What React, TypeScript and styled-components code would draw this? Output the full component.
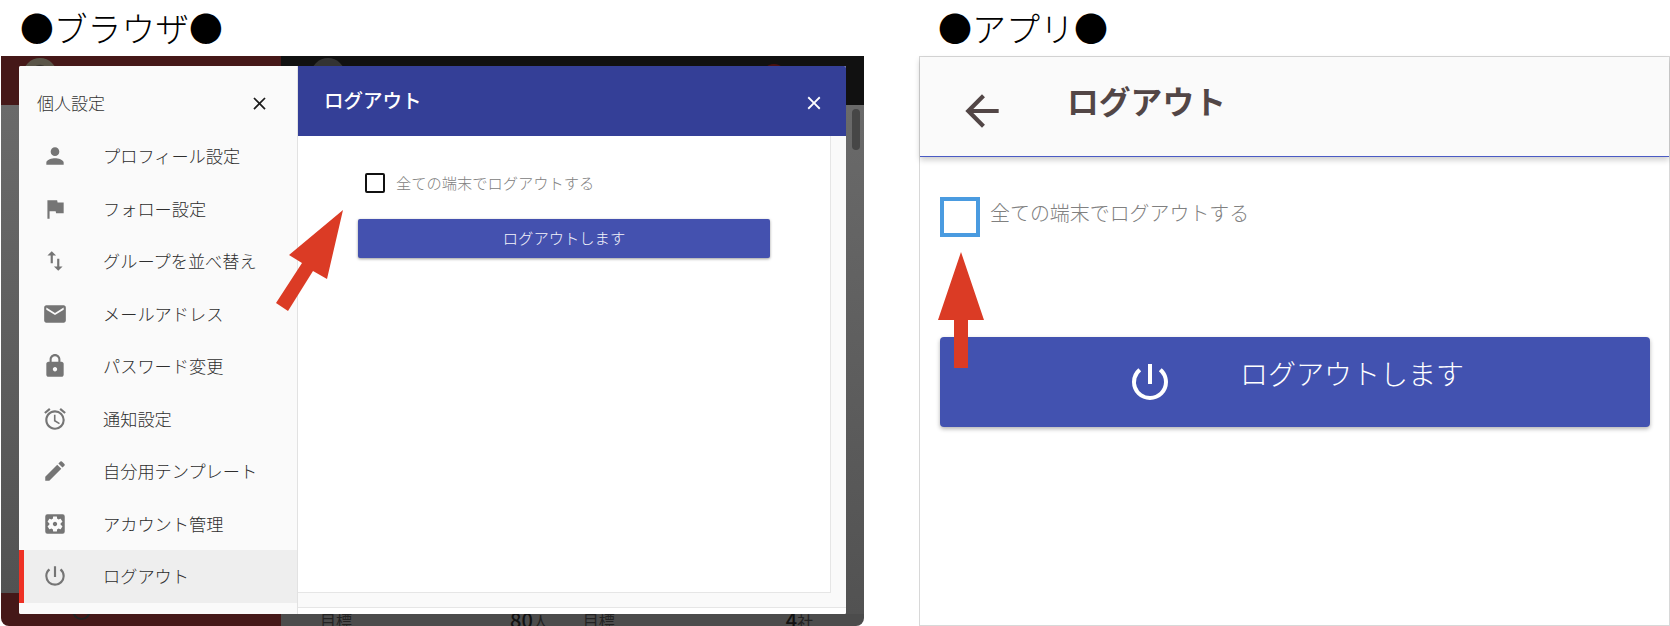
import React from "react";
import styled, { createGlobalStyle } from "styled-components";
import {
  MdPerson, MdFlag, MdSwapVert, MdEmail, MdLock, MdAccessAlarm, MdEdit,
  MdSettingsApplications, MdPowerSettingsNew, MdClose, MdArrowBack,
} from "react-icons/md";

const Global = createGlobalStyle`
  html, body { margin: 0; padding: 0; background: #fff; }
  body { font-family: "Noto Sans CJK JP", "Noto Sans", sans-serif; overflow: hidden; }
`;

const Page = styled.div`
  position: relative;
  width: 1670px;
  height: 626px;
  display: flex;
  padding-left: 1px;
  box-sizing: border-box;
  gap: 55px;
  overflow: hidden;
`;

const Section = styled.section<{ $w: number }>`
  width: ${(p) => p.$w}px;
  display: flex;
  flex-direction: column;
  flex: none;
`;

const Heading = styled.h2<{ $left: number; $size: number }>`
  margin: 0;
  height: 56px;
  padding-left: ${(p) => p.$left}px;
  font-size: ${(p) => p.$size}px;
  font-weight: 300;
  line-height: 56px;
  color: #000;
  white-space: nowrap;
`;

/* ---------- dimmed page behind the dialog ---------- */
const Backdrop = styled.div`
  position: relative;
  height: 570px;
  display: flex;
  border-bottom-right-radius: 8px;
  border-bottom-left-radius: 8px;
  overflow: hidden;
`;

const BackColumn = styled.div<{ $w: number }>`
  width: ${(p) => p.$w}px;
  flex: none;
  display: flex;
  flex-direction: column;
`;

const BackTop = styled.div<{ $bg: string; $left: number; $gap?: number }>`
  height: 49px;
  background: ${(p) => p.$bg};
  display: flex;
  align-items: flex-start;
  padding-left: ${(p) => p.$left}px;
  gap: ${(p) => p.$gap ?? 0}px;
`;

const Avatar = styled.i<{ $c: string; $size?: number; $top?: number }>`
  width: ${(p) => p.$size ?? 34}px;
  height: ${(p) => p.$size ?? 34}px;
  border-radius: 50%;
  background: ${(p) => p.$c};
  margin-top: ${(p) => p.$top ?? 2}px;
  display: block;
  flex: none;
`;

const BackMiddle = styled.div`
  flex: 1;
  background: linear-gradient(#6a6a6a, #525252 100%);
  display: flex;
  justify-content: flex-end;
`;

const ScrollThumb = styled.i`
  display: block;
  width: 8px;
  height: 41px;
  margin: 4px 4px 0 0;
  border-radius: 4px;
  background: #464646;
`;

const BackBottom = styled.div<{ $bg: string; $h: number }>`
  height: ${(p) => p.$h}px;
  background: ${(p) => p.$bg};
  display: flex;
  align-items: flex-end;
  font-size: 16px;
  line-height: 12px;
  color: #222;
  overflow: hidden;
`;

const FootIcons = styled.div`
  display: flex;
  gap: 15px;
  padding: 0 0 6px 71px;
`;

const FootDot = styled.i<{ $c: string; $size: number }>`
  display: block;
  width: ${(p) => p.$size}px;
  height: ${(p) => p.$size}px;
  border-radius: 50%;
  box-sizing: border-box;
  border: 2px solid ${(p) => p.$c};
`;

const BackLabel = styled.span<{ $left: number }>`
  margin-left: ${(p) => p.$left}px;
  white-space: nowrap;
  height: 12px;
`;

const BackBold = styled.b`
  font-size: 20px;
  font-weight: 500;
  color: #111;
`;

/* ---------- dialog ---------- */
const Modal = styled.div`
  position: absolute;
  left: 18px;
  top: 10px;
  width: 827px;
  height: 548px;
  display: flex;
  border-radius: 2px;
  overflow: hidden;
  background: #fff;
`;

const Side = styled.nav`
  width: 279px;
  flex: none;
  background: #fafafa;
  border-right: 1px solid #e2e2e2;
  box-sizing: border-box;
`;

const SideHead = styled.div`
  height: 64px;
  box-sizing: border-box;
  padding: 10px 27px 0 18px;
  display: flex;
  align-items: center;
  justify-content: space-between;
  font-size: 17px;
  color: #333;
  font-weight: 300;
  span { margin-top: -2px; }
  svg { color: #1c1c1c; }
`;

const Row = styled.div<{ $active?: boolean }>`
  height: 52.5px;
  box-sizing: border-box;
  display: flex;
  align-items: center;
  gap: 35px;
  padding-left: 18px;
  border-left: 5px solid ${(p) => (p.$active ? "#ee3124" : "transparent")};
  background: ${(p) => (p.$active ? "#eeeeee" : "transparent")};
  font-size: 17.2px;
  font-weight: 300;
  color: #2e2e2e;
  white-space: nowrap;
  span { margin-top: -1px; }
  svg { color: #757575; flex: none; }
`;

const Panel = styled.div`
  flex: 1;
  display: flex;
  flex-direction: column;
  background: #fafafa;
`;

const PanelBar = styled.header`
  height: 70px;
  flex: none;
  display: flex;
  align-items: center;
  justify-content: space-between;
  padding: 0 21px 0 26px;
  background: #343f97;
  color: #fff;
  font-size: 19.5px;
  font-weight: 500;
  span { margin-top: -4px; }
  svg { margin-top: 4px; }
`;

const PanelBody = styled.div`
  width: 533px;
  height: 457px;
  flex: none;
  box-sizing: border-box;
  background: #fff;
  border-right: 1px solid #e6e6e6;
  border-bottom: 1px solid #e6e6e6;
  padding: 37px 0 0 60px;
`;

const PanelFoot = styled.div`
  height: 7px;
  margin-top: 14px;
  border-top: 1px solid #e6e6e6;
  background: #fff;
`;

const CheckRow = styled.label`
  display: flex;
  align-items: center;
  gap: 11px;
  padding-left: 7px;
  font-size: 15.25px;
  font-weight: 300;
  color: #808080;
  line-height: 20px;
  white-space: nowrap;
  span { margin-top: -2px; }
`;

const SmallBox = styled.i`
  display: block;
  width: 20px;
  height: 20px;
  box-sizing: border-box;
  border: 2.5px solid #111;
  border-radius: 2px;
  background: #fff;
`;

const SmallButton = styled.button`
  display: block;
  width: 412px;
  height: 39px;
  margin-top: 26px;
  padding: 0 0 4px;
  border: 0;
  border-radius: 2px;
  background: #4451af;
  color: #f4f4fb;
  font: 300 15.3px "Noto Sans CJK JP", sans-serif;
  box-shadow: 0 1px 3px rgba(0, 0, 0, 0.4);
`;

/* ---------- app frame ---------- */
const AppFrame = styled.div`
  height: 570px;
  box-sizing: border-box;
  border: 1px solid #d8d8d8;
  display: flex;
  flex-direction: column;
`;

const AppBar = styled.header`
  height: 100px;
  flex: none;
  box-sizing: border-box;
  background: #fafafa;
  border-bottom: 1px solid #4a5bc4;
  box-shadow: 0 3px 6px rgba(0, 0, 0, 0.2);
  display: flex;
  color: #524646;
  padding-left: 37px;
  gap: 60px;
`;

const BackIcon = styled.span`
  display: block;
  margin-top: 29px;
  height: 50px;
  svg { display: block; }
`;

const AppTitle = styled.h1`
  margin: 19px 0 0;
  font-size: 31.8px;
  line-height: 48px;
  font-weight: 700;
  white-space: nowrap;
`;

const AppBody = styled.div`
  padding: 40px 19px 0 20px;
`;

const AppCheckRow = styled.label`
  display: flex;
  gap: 10px;
  font-size: 19.95px;
  font-weight: 300;
  color: #808080;
  line-height: 32px;
  white-space: nowrap;
`;

const BigBox = styled.i`
  display: block;
  width: 40px;
  height: 40px;
  box-sizing: border-box;
  border: 4px solid #4a9be0;
  background: #fff;
`;

const BigButton = styled.button`
  width: 100%;
  height: 90px;
  margin-top: 100px;
  padding: 0;
  border: 0;
  border-radius: 4px;
  background: #4252b0;
  color: #fff;
  display: flex;
  align-items: center;
  justify-content: center;
  gap: 66px;
  box-shadow: 0 2px 4px rgba(0, 0, 0, 0.3);
  svg { flex: none; }
`;

const BigButtonText = styled.span`
  font: 300 28px "Noto Sans CJK JP", sans-serif;
  margin-bottom: 18px;
  white-space: nowrap;
`;

/* ---------- red annotation arrows over the picture ---------- */
const Arrow = styled.svg<{ $x: number; $y: number }>`
  position: absolute;
  left: ${(p) => p.$x}px;
  top: ${(p) => p.$y}px;
  overflow: visible;
`;

const items = [
  { icon: MdPerson, label: "プロフィール設定" },
  { icon: MdFlag, label: "フォロー設定" },
  { icon: MdSwapVert, label: "グループを並べ替え" },
  { icon: MdEmail, label: "メールアドレス" },
  { icon: MdLock, label: "パスワード変更" },
  { icon: MdAccessAlarm, label: "通知設定" },
  { icon: MdEdit, label: "自分用テンプレート" },
  { icon: MdSettingsApplications, label: "アカウント管理" },
  { icon: MdPowerSettingsNew, label: "ログアウト", active: true },
];

export default function App() {
  return (
    <Page>
      <Global />
      <Section $w={863}>
        <Heading $left={19} $size={33.8}>●ブラウザ●</Heading>
        <Backdrop>
          <BackColumn $w={280}>
            <BackTop $bg="#451818" $left={22}>
              <Avatar $c="radial-gradient(circle at 50% 45%, #1c1c1c 0 7px, #5a5548 9px)" />
            </BackTop>
            <BackMiddle />
            <BackBottom $bg="#451818" $h={33}>
              <FootIcons>
                <FootDot $c="#222" $size={19} />
                <FootDot $c="#666" $size={12} />
              </FootIcons>
            </BackBottom>
          </BackColumn>
          <BackColumn $w={583}>
            <BackTop $bg="#111111" $left={30} $gap={416}>
              <Avatar $c="#333333" />
              <Avatar $c="#4a1010" $size={26} $top={8} />
            </BackTop>
            <BackMiddle><ScrollThumb /></BackMiddle>
            <BackBottom $bg="#4c4c4c" $h={12}>
              <BackLabel $left={39}>目標</BackLabel>
              <BackLabel $left={158}><BackBold>80</BackBold>人</BackLabel>
              <BackLabel $left={34}>目標</BackLabel>
              <BackLabel $left={171}><BackBold>4</BackBold>社</BackLabel>
            </BackBottom>
          </BackColumn>
          <Modal>
            <Side>
              <SideHead>
                <span>個人設定</span>
                <MdClose size={21} />
              </SideHead>
              {items.map(({ icon: Icon, label, active }) => (
                <Row key={label} $active={active}>
                  <Icon size={26} />
                  <span>{label}</span>
                </Row>
              ))}
            </Side>
            <Panel>
              <PanelBar>
                <span>ログアウト</span>
                <MdClose size={22} />
              </PanelBar>
              <PanelBody>
                <CheckRow>
                  <SmallBox />
                  <span>全ての端末でログアウトする</span>
                </CheckRow>
                <SmallButton>ログアウトします</SmallButton>
              </PanelBody>
              <PanelFoot />
            </Panel>
          </Modal>
        </Backdrop>
      </Section>

      <Section $w={751}>
        <Heading $left={19} $size={34}>●アプリ●</Heading>
        <AppFrame>
          <AppBar>
            <BackIcon><MdArrowBack size={50} /></BackIcon>
            <AppTitle>ログアウト</AppTitle>
          </AppBar>
          <AppBody>
            <AppCheckRow>
              <BigBox />
              全ての端末でログアウトする
            </AppCheckRow>
            <BigButton>
              <MdPowerSettingsNew size={48} />
              <BigButtonText>ログアウトします</BigButtonText>
            </BigButton>
          </AppBody>
        </AppFrame>
      </Section>

      <Arrow $x={276} $y={210} width={67} height={101} viewBox="0 0 67 101">
        <polygon
          points="67,0 51,69 37,61 12,101 0,93 26,53 13,45"
          fill="#db3b25"
        />
      </Arrow>
      <Arrow $x={938} $y={252} width={46} height={116} viewBox="0 0 46 116">
        <polygon points="23,0 46,68 30,68 30,116 16,116 16,68 0,68" fill="#db3b25" />
      </Arrow>
    </Page>
  );
}
